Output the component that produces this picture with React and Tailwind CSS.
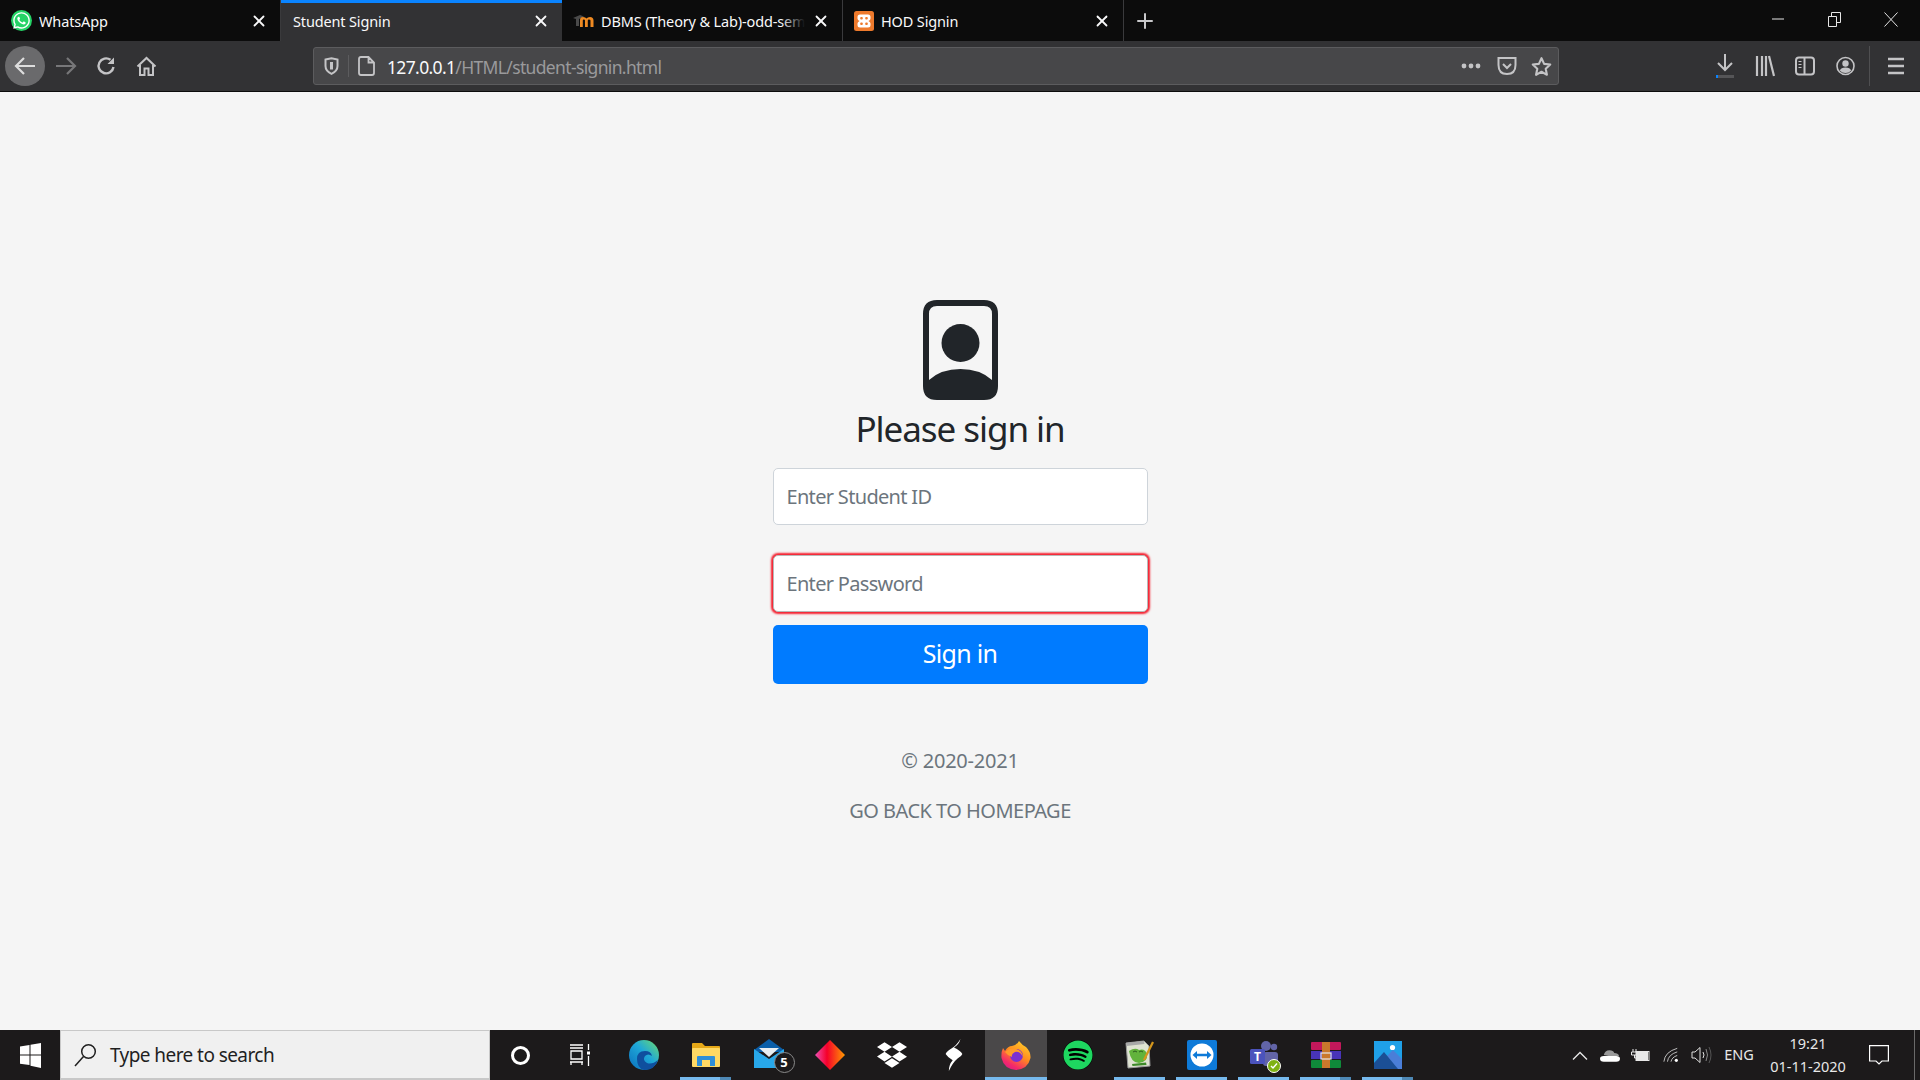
import { useState } from "react";
import { X, Plus } from "lucide-react";
import { FaWhatsapp, FaDropbox, FaSpotify } from "react-icons/fa";

const tabs = [
  { title: "WhatsApp", icon: "whatsapp" },
  { title: "Student Signin", active: true },
  { title: "DBMS (Theory & Lab)-odd-sem", icon: "moodle", fade: true },
  { title: "HOD Signin", icon: "xampp" },
];

const TabIcon = ({ name }) => {
  if (name === "whatsapp") {
    return (
      <span className="w-[21px] h-[21px] rounded-full bg-[#25d366] flex items-center justify-center shrink-0 text-white">
        <FaWhatsapp size={19} />
      </span>
    );
  }
  if (name === "moodle") {
    return (
      <svg width="21" height="20" viewBox="0 0 21 20" className="shrink-0">
        <path d="M0 7 L7 4 L11 5.5 L6 8 V15 H3 V8 Z" fill="#4a4a4a" />
        <path d="M7 16 V9 Q7 6 10 6 Q12.5 6 13.5 7.5 Q14.5 6 17 6 Q20.5 6 20.5 9.5 V16 H17.5 V9.5 Q17.5 8.5 15.8 8.5 Q14.8 8.5 14.8 9.5 V16 H12 V9.5 Q12 8.5 10.8 8.5 Q9.8 8.5 9.8 9.5 V16 Z" fill="#ef8a22" />
      </svg>
    );
  }
  if (name === "xampp") {
    return (
      <svg width="20" height="20" viewBox="0 0 20 20" className="shrink-0">
        <rect width="20" height="20" rx="2.5" fill="#ee7a2c" />
        <path d="M6 3.5 H14 Q16.5 3.5 16.5 6 V7.5 Q16.5 9 14.5 10 Q16.5 11 16.5 12.5 V14 Q16.5 16.5 14 16.5 H6 Q3.5 16.5 3.5 14 V12.5 Q3.5 11 5.5 10 Q3.5 9 3.5 7.5 V6 Q3.5 3.5 6 3.5 Z" fill="#fff" />
        <rect x="6.2" y="6" width="2.6" height="2.4" rx="1" fill="#ee7a2c" />
        <rect x="11.2" y="6" width="2.6" height="2.4" rx="1" fill="#ee7a2c" />
        <rect x="6.2" y="11.6" width="2.6" height="2.4" rx="1" fill="#ee7a2c" />
        <rect x="11.2" y="11.6" width="2.6" height="2.4" rx="1" fill="#ee7a2c" />
      </svg>
    );
  }
  return null;
};

const TabBar = () => (
  <div className="h-[41px] bg-[#0c0c0c] flex items-stretch shrink-0">
    {tabs.map((tab) => (
      <div
        key={tab.title}
        className={
          tab.active
            ? "w-[281px] bg-[#323234] border-t-[3px] border-[#0a84ff] flex items-center pl-3 pr-[12px] pb-[3px] gap-2 text-[#f9f9fa]"
            : "w-[281px] border-r border-[#3a3a3c] flex items-center pl-[11px] pr-[12px] gap-[7px] text-[#f9f9fa]"
        }
      >
        {tab.icon && <TabIcon name={tab.icon} />}
        <div className="relative flex-1 overflow-hidden whitespace-nowrap text-[14.5px] leading-5 tracking-[-0.01em]">
          {tab.title}
          {tab.fade && (
            <span className="absolute right-0 top-0 bottom-0 w-6 bg-gradient-to-r from-transparent to-[#0c0c0c]" />
          )}
        </div>
        <X size={18} strokeWidth={2.4} className="shrink-0 text-[#f9f9fa]" />
      </div>
    ))}
    <div className="w-[42px] flex items-center justify-center text-[#c8c8ca]">
      <Plus size={24} strokeWidth={2} />
    </div>
    <div className="flex-1" />
    <div className="w-[57px] flex items-center justify-center pb-[3px]">
      <svg width="12" height="2" viewBox="0 0 12 2"><path d="M0 1 H12" stroke="#e6e6e6" /></svg>
    </div>
    <div className="w-[56px] flex items-center justify-center pb-[3px]">
      <svg width="13" height="15" viewBox="0 0 13 15" fill="none" stroke="#e6e6e6">
        <path d="M.5 4.5 H8.5 V14.5 H.5 Z" />
        <path d="M3.5 4 V.5 H12.5 V10.5 H9" />
      </svg>
    </div>
    <div className="w-[58px] flex items-center justify-center pb-[3px]">
      <svg width="14" height="15" viewBox="0 0 14 15" stroke="#e6e6e6"><path d="M.5 .5 L13.5 14.5 M13.5 .5 L.5 14.5" /></svg>
    </div>
  </div>
);

const ToolIcon = ({ width = 40, children, className = "" }) => (
  <div className={"h-full flex items-center justify-center shrink-0 " + className} style={{ width }}>
    {children}
  </div>
);

const Toolbar = () => (
  <div className="h-[51px] bg-[#323234] border-b border-[#0c0c0c] flex items-center shrink-0 text-[#c4c4c6]">
    <div className="pl-[5px] flex items-center h-full">
      <div className="w-10 h-10 rounded-full bg-[#6a6a6c] flex items-center justify-center">
        <svg width="22" height="20" viewBox="0 0 22 20" fill="none" stroke="#ddd" strokeWidth="2.2"><path d="M21 10 H2 M10 2 L2 10 L10 18" /></svg>
      </div>
    </div>
    <ToolIcon width={41}>
      <svg width="22" height="20" viewBox="0 0 22 20" fill="none" stroke="#777779" strokeWidth="2.2"><path d="M1 10 H20 M12 2 L20 10 L12 18" /></svg>
    </ToolIcon>
    <ToolIcon width={40}>
      <svg width="20" height="20" viewBox="0 0 20 20" fill="none" stroke="currentColor" strokeWidth="2.4">
        <path d="M17.5 11 A7.5 7.5 0 1 1 14.5 3.8" />
        <path d="M18 1.5 V8 H11.5 Z" fill="currentColor" stroke="none" />
      </svg>
    </ToolIcon>
    <ToolIcon width={40}>
      <svg width="21" height="21" viewBox="0 0 21 21" fill="none" stroke="currentColor" strokeWidth="2">
        <path d="M1.5 10.5 L10.5 2 L19.5 10.5" />
        <path d="M4 9 V19 H8.5 V12.5 H12.5 V19 H17 V9" />
      </svg>
    </ToolIcon>
    <div className="w-[147px] shrink-0" />
    <div className="w-[1246px] h-[38px] bg-[#474749] border border-[#5c5c5e] rounded-[3px] flex items-center shrink-0">
      <ToolIcon width={34}>
        <svg width="15" height="18" viewBox="0 0 15 18" fill="none" stroke="currentColor" strokeWidth="2">
          <path d="M1.5 2.5 L7.5 1.2 L13.5 2.5 V9 Q13.5 14 7.5 16.8 Q1.5 14 1.5 9 Z" />
          <path d="M7.5 5 V12.5" strokeWidth="3" />
        </svg>
      </ToolIcon>
      <div className="w-px h-[22px] bg-[#5c5c5e] shrink-0" />
      <ToolIcon width={34}>
        <svg width="17" height="20" viewBox="0 0 17 20" fill="none" stroke="currentColor" strokeWidth="1.8">
          <path d="M3 1 H10.5 L16 6.5 V17 Q16 19 14 19 H3 Q1 19 1 17 V3 Q1 1 3 1 Z M10.5 1 V6.5 H16" />
        </svg>
      </ToolIcon>
      <div className="flex-1 text-[17.5px] leading-6 whitespace-nowrap pl-[4px] pt-[1px] tracking-[-0.037em]">
        <span className="text-[#f9f9fa]">127.0.0.1</span>
        <span className="text-[#9a9a9c]">/HTML/student-signin.html</span>
      </div>
      <ToolIcon width={36}>
        <svg width="20" height="6" viewBox="0 0 20 6" fill="currentColor">
          <circle cx="3" cy="3" r="2.4" /><circle cx="10" cy="3" r="2.4" /><circle cx="17" cy="3" r="2.4" />
        </svg>
      </ToolIcon>
      <ToolIcon width={35}>
        <svg width="20" height="20" viewBox="0 0 20 20" fill="none" stroke="currentColor" strokeWidth="2">
          <path d="M1.5 2 H18.5 V9 Q18.5 18 10 18 Q1.5 18 1.5 9 Z" />
          <path d="M6 8 L10 12 L14 8" />
        </svg>
      </ToolIcon>
      <ToolIcon width={34}>
        <svg width="21" height="21" viewBox="0 0 24 24" fill="none" stroke="currentColor" strokeWidth="2.4" strokeLinejoin="round">
          <path d="M12 2.5 L15 9 L22 9.8 L16.8 14.5 L18.2 21.5 L12 18 L5.8 21.5 L7.2 14.5 L2 9.8 L9 9 Z" />
        </svg>
      </ToolIcon>
    </div>
    <div className="w-[146px] shrink-0" />
    <ToolIcon width={40}>
      <div className="relative w-[18px] h-[24px]">
        <svg width="18" height="18" viewBox="0 0 18 18" fill="none" stroke="currentColor" strokeWidth="2"><path d="M9 0 V16 M2 9 L9 16 L16 9" /></svg>
        <div className="absolute left-0 right-0 bottom-0 h-[3px] bg-[#555557]">
          <div className="w-[2px] h-full bg-[#0a84ff]" />
        </div>
      </div>
    </ToolIcon>
    <ToolIcon width={40}>
      <svg width="20" height="22" viewBox="0 0 20 22" fill="none" stroke="currentColor" strokeWidth="2.2">
        <path d="M2 1 V21 M7 1 V21 M11 1 V21 M14 1 L19 21" />
      </svg>
    </ToolIcon>
    <ToolIcon width={40}>
      <svg width="20" height="20" viewBox="0 0 20 20" fill="none" stroke="currentColor" strokeWidth="2">
        <rect x="1" y="1.5" width="18" height="17" rx="3" />
        <path d="M9.5 1.5 V18.5" />
        <path d="M3.5 5.5 H6.5 M3.5 8.5 H6.5 M3.5 11.5 H6.5" strokeWidth="1.2" />
      </svg>
    </ToolIcon>
    <ToolIcon width={40}>
      <svg width="19" height="20" viewBox="0 0 19 20" fill="currentColor">
        <circle cx="9.5" cy="10" r="8.5" fill="none" stroke="currentColor" strokeWidth="1.6" />
        <circle cx="9.5" cy="7.5" r="3.2" />
        <path d="M3.8 14.5 Q5 11.5 9.5 11.5 Q14 11.5 15.2 14.5 Q13 17 9.5 17 Q6 17 3.8 14.5 Z" />
      </svg>
    </ToolIcon>
    <div className="w-px h-[40px] bg-[#4f4f51] shrink-0 ml-[4px]" />
    <ToolIcon width={52}>
      <svg width="16" height="18" viewBox="0 0 16 18" fill="none" stroke="currentColor" strokeWidth="2.4"><path d="M0 2 H16 M0 9 H16 M0 16 H16" /></svg>
    </ToolIcon>
  </div>
);

const SigninForm = () => {
  const [studentId, setStudentId] = useState("");
  const [password, setPassword] = useState("");

  return (
    <form className="w-[375px] flex flex-col items-center" onSubmit={(e) => e.preventDefault()}>
      <svg width="75" height="100" viewBox="0 0 75 100" className="mb-[8px]">
        <path
          fillRule="evenodd"
          d="M14 0 H61 Q75 0 75 14 V86 Q75 100 61 100 H14 Q0 100 0 86 V14 Q0 0 14 0 Z M14 6 Q6 6 6 14 V80 Q18 69 37.5 69 Q57 69 69 80 V14 Q69 6 61 6 Z"
          fill="#212529"
        />
        <circle cx="37.5" cy="43" r="19" fill="#212529" />
      </svg>
      <h1 className="text-[35px] leading-[42px] text-[#212529] mb-[18px] font-normal whitespace-nowrap tracking-[-0.03em]">Please sign in</h1>
      <input
        type="text"
        value={studentId}
        onChange={(e) => setStudentId(e.target.value)}
        placeholder="Enter Student ID"
        className="w-full h-[57px] bg-white border border-[#ced4da] rounded-[5px] px-[13px] text-[20px] tracking-[-0.034em] outline-none placeholder:text-[#6c757d] mb-[30px]"
      />
      <input
        type="password"
        value={password}
        onChange={(e) => setPassword(e.target.value)}
        placeholder="Enter Password"
        className="w-full h-[57px] bg-white border border-[#b8b8b8] rounded-[5px] px-[13px] text-[20px] tracking-[-0.034em] outline-none placeholder:text-[#6c757d] shadow-[0_0_2px_2px_#f5202f] mb-[13px]"
      />
      <button type="submit" className="w-full h-[59px] bg-[#007bff] rounded-[5px] text-white text-[25px] tracking-[-0.028em] mb-[62px]">
        Sign in
      </button>
      <p className="text-[20px] leading-[30px] text-[#6c757d] mb-[20px] tracking-[-0.011em]">© 2020-2021</p>
      <a className="text-[20px] leading-[30px] text-[#6c757d] tracking-[-0.026em]">GO BACK TO HOMEPAGE</a>
    </form>
  );
};

const EdgeIcon = () => (
  <svg width="32" height="32" viewBox="0 0 32 32">
    <defs>
      <linearGradient id="edge" x1="0" y1="1" x2="1" y2="0">
        <stop offset="0" stopColor="#0a6ebd" />
        <stop offset="0.55" stopColor="#1fa8d8" />
        <stop offset="1" stopColor="#6fdc6c" />
      </linearGradient>
    </defs>
    <circle cx="16" cy="16" r="15" fill="url(#edge)" />
    <path d="M9 20 Q9 12 17 12 Q23 12 24 17 Q20 14 17 17 Q14 21 19 24 Q24 26 30 21 Q27 31 16 31 Q9 29 9 20 Z" fill="#0f4f9e" />
  </svg>
);

const ExplorerIcon = () => (
  <svg width="30" height="26" viewBox="0 0 30 26">
    <path d="M1 2 Q1 1 2 1 H11 L14 4 H28 Q29 4 29 5 V8 H1 Z" fill="#e6a817" />
    <rect x="1" y="6" width="28" height="19" rx="1" fill="#ffd964" />
    <path d="M6 24 V15 Q6 14 7 14 H23 Q24 14 24 15 V24 H19 V18 H11 V24 Z" fill="#2f8fd8" />
  </svg>
);

const MailIcon = () => (
  <div className="relative w-[41px] h-[32px] ml-[12px]">
    <svg width="30" height="30" viewBox="0 0 30 30">
      <path d="M0 11 L15 0 L30 11 V13 H0 Z" fill="#0a5ea8" />
      <path d="M5 9 H25 L15 18 Z" fill="#e8eef2" />
      <path d="M0 10 L15 20 L30 10 V29 H0 Z" fill="#28a8ea" />
    </svg>
    <span className="absolute right-0 bottom-[-2px] w-[21px] h-[21px] rounded-full bg-[#1c1a1b] border border-[#8a8a8a] text-white text-[13px] font-bold flex items-center justify-center">
      5
    </span>
  </div>
);

const DiamondIcon = () => (
  <svg width="30" height="30" viewBox="0 0 30 30">
    <defs>
      <linearGradient id="diamond" x1="0" y1="0" x2="1" y2="0">
        <stop offset="0" stopColor="#ee4fb4" />
        <stop offset="0.4" stopColor="#f5002a" />
        <stop offset="1" stopColor="#ff9a00" />
      </linearGradient>
    </defs>
    <path d="M15 0 L30 15 L15 30 L0 15 Z" fill="url(#diamond)" />
  </svg>
);

const StreamIcon = () => (
  <svg width="18" height="32" viewBox="0 0 14 30" preserveAspectRatio="none" fill="#fff">
    <path d="M12 0 Q11 5 7 8 Q12 11 13.5 14 Q13 16 10 18 Q6 22 3 30 Q3 24 6 20 Q2 17 0.5 14 Q1 12 5 9 Q9 6 12 0 Z" />
  </svg>
);

const FirefoxIcon = () => (
  <svg width="30" height="30" viewBox="0 0 30 30">
    <defs>
      <linearGradient id="fox" x1="0.8" y1="0" x2="0.2" y2="1">
        <stop offset="0" stopColor="#ffd02a" />
        <stop offset="0.45" stopColor="#ff8a1f" />
        <stop offset="0.8" stopColor="#f4296a" />
        <stop offset="1" stopColor="#d81b8a" />
      </linearGradient>
    </defs>
    <path d="M18 1 Q21 5 25 7 Q30 12 29.5 18 Q27 29 15 30 Q3 29 0.5 18 Q0 12 2 8 L4 11 Q7 6 11 6 Q16 5 18 1 Z" fill="url(#fox)" />
    <circle cx="15.5" cy="15.5" r="6.5" fill="#7b2fd1" />
    <path d="M4 12 Q9 7 15 9 Q21 10 22 17 Q19 11 14 12 Q10 14 11 17 Q7 16 4 12 Z" fill="#ff9a2a" />
  </svg>
);

const NotepadIcon = () => (
  <svg width="30" height="30" viewBox="0 0 30 30">
    <path d="M1 3 L19 1 L24 6 L25 26 L3 28 Z" fill="#dfe3d2" stroke="#9a9a9a" />
    <path d="M1 3 L19 1 L19.5 4 L1.5 6 Z" fill="#a8a8a8" />
    <path d="M4 11 Q10 7 14 10 Q20 8 22 14 Q23 22 14 23 Q6 23 4 11 Z" fill="#62b33c" />
    <path d="M7 24 L21 22.5 L21.5 25 L7.5 26 Z" fill="#3e8a2a" />
    <path d="M8 12 Q10 10 12 12 M14 12 Q16 10 18 12" stroke="#2d5e1d" fill="none" />
    <path d="M19 20 L28 2" stroke="#d4961c" strokeWidth="2.2" />
  </svg>
);

const TeamViewerIcon = () => (
  <svg width="30" height="30" viewBox="0 0 30 30">
    <rect width="30" height="30" rx="2" fill="#0e7ad8" />
    <circle cx="15" cy="15" r="11.5" fill="#fff" />
    <path d="M5.5 15 L10 11 V13.7 H20 V11 L24.5 15 L20 19 V16.3 H10 V19 Z" fill="#0e7ad8" />
  </svg>
);

const TeamsIcon = () => (
  <div className="relative w-[31px] h-[31px]">
    <svg width="30" height="30" viewBox="0 0 30 30">
      <circle cx="17" cy="6" r="5" fill="#6264a7" />
      <circle cx="25" cy="7" r="3.2" fill="#6264a7" />
      <rect x="14" y="12" width="15" height="14" rx="3" fill="#6264a7" />
      <rect x="1" y="9" width="15" height="15" rx="1.5" fill="#4b53bc" />
    </svg>
    <span className="absolute left-[3px] top-[9px] text-white text-[12px] font-bold leading-[15px] w-[12px] text-center">T</span>
    <span className="absolute right-[-1px] bottom-[-2px] w-[14px] h-[14px] rounded-full bg-[#7fb213] border border-white flex items-center justify-center">
      <svg width="8" height="8" viewBox="0 0 8 8" fill="none" stroke="#fff" strokeWidth="1.4"><path d="M1 4 L3 6 L7 1.5" /></svg>
    </span>
  </div>
);

const WinrarIcon = () => (
  <svg width="30" height="26" viewBox="0 0 30 26">
    <rect width="30" height="8" rx="1" fill="#c2185b" />
    <rect y="9" width="30" height="8" fill="#4834b8" />
    <rect y="18" width="30" height="8" rx="1" fill="#0f8a3a" />
    <rect x="11" width="8" height="26" fill="#c9782c" />
    <rect x="10" y="11" width="10" height="6" fill="none" stroke="#e8e8e8" strokeWidth="1.2" />
  </svg>
);

const PhotosIcon = () => (
  <svg width="28" height="28" viewBox="0 0 28 28">
    <rect width="28" height="28" fill="#1fa0e8" />
    <circle cx="18.5" cy="6.5" r="2.6" fill="#fff" />
    <path d="M13 15 L19 9 L28 18 V28 H10 Z" fill="#4a7ed8" />
    <path d="M0 22 L10 11 L24 28 H0 Z" fill="#1b4f96" />
  </svg>
);

const taskbarApps = [
  { key: "edge", icon: <EdgeIcon /> },
  { key: "explorer", icon: <ExplorerIcon />, open: true, split: true },
  { key: "mail", icon: <MailIcon /> },
  { key: "diamond", icon: <DiamondIcon /> },
  { key: "dropbox", icon: <FaDropbox size={30} color="#fff" /> },
  { key: "stream", icon: <StreamIcon /> },
  { key: "firefox", icon: <FirefoxIcon />, focused: true },
  { key: "spotify", icon: <span className="w-[30px] h-[30px] rounded-full bg-black flex items-center justify-center"><FaSpotify size={30} color="#1ed760" /></span> },
  { key: "notepad", icon: <NotepadIcon />, open: true },
  { key: "teamviewer", icon: <TeamViewerIcon />, open: true },
  { key: "teams", icon: <TeamsIcon />, open: true },
  { key: "winrar", icon: <WinrarIcon />, open: true, split: true },
  { key: "photos", icon: <PhotosIcon />, open: true, split: true },
];

const TaskSlot = ({ app }) => (
  <div className={app.focused ? "relative w-[62px] h-full bg-[#4a4849] flex items-center justify-center" : "relative w-[62px] h-full flex items-center justify-center"}>
    {app.icon}
    {app.focused && <div className="absolute left-0 right-0 bottom-0 h-[3px] bg-[#76b9ed]" />}
    {app.open && !app.focused && <div className="absolute left-[5px] right-[6px] bottom-0 h-[3px] bg-[#76b9ed]" />}
    {app.split && <div className="absolute left-[45px] right-[6px] bottom-0 h-[3px] bg-[#4e88b5]" />}
  </div>
);

const Taskbar = () => (
  <div className="h-[50px] bg-[#1c1a1b] flex items-center shrink-0 text-white">
    <div className="w-[60px] h-full flex items-center justify-center">
      <svg width="21" height="25" viewBox="0 0 21 25" fill="#fff">
        <path d="M0 3.5 L9.5 2 V11.5 H0 Z M10.5 1.8 L21 0 V11.5 H10.5 Z M0 12.5 H9.5 V22 L0 20.8 Z M10.5 12.5 H21 V25 L10.5 22.8 Z" />
      </svg>
    </div>
    <div className="w-[430px] h-full bg-[#f0f0f0] border border-[#c8c8c8] border-b-2 flex items-center pl-[13px] gap-[13px] text-[#1f1f1f]">
      <svg width="23" height="24" viewBox="0 0 23 24" fill="none" stroke="#1f1f1f" strokeWidth="1.5">
        <circle cx="14.5" cy="8.5" r="6.8" />
        <path d="M9.5 13.5 L1 23" />
      </svg>
      <span className="text-[19px] tracking-[-0.03em] pt-[1px]">Type here to search</span>
    </div>
    <div className="w-[60px] h-full flex items-center justify-center">
      <span className="w-[19px] h-[19px] rounded-full border-[3px] border-white" />
    </div>
    <div className="w-[60px] h-full flex items-center justify-center">
      <svg width="20" height="22" viewBox="0 0 20 22" fill="none" stroke="#fff" strokeWidth="1.3">
        <path d="M0 1 H13 M0 4 H13 M1 7 H12 V15 H1 Z M0 18 H13 M1 18 V21 M12 18 V21" />
        <path d="M18.5 0 V6 M18.5 12 V22" />
        <rect x="17" y="7.5" width="3" height="3" fill="#fff" stroke="none" />
      </svg>
    </div>
    <div className="w-[3px] shrink-0" />
    {taskbarApps.map((app) => (
      <TaskSlot key={app.key} app={app} />
    ))}
    <div className="flex-1" />
    <div className="flex items-center h-full text-[#e8e8e8]">
      <svg width="16" height="9" viewBox="0 0 16 9" fill="none" stroke="currentColor" strokeWidth="1.3" className="mr-[12px]"><path d="M1 8.5 L8 1.5 L15 8.5" /></svg>
      <svg width="20" height="13" viewBox="0 0 21 13" className="mr-[10px]">
        <path d="M4 6 Q5 1 10 1 Q14 1 15 4 Q19 4 20 7 L9 7 Z" fill="#9a9a9a" />
        <path d="M0 10 Q0 7 4 7 H17 Q21 7 21 10 Q21 13 17 13 H4 Q0 13 0 10 Z" fill="#fff" />
      </svg>
      <svg width="20" height="13" viewBox="0 0 20 13" fill="none" stroke="#e8e8e8" className="mr-[13px]">
        <path d="M3 0 V3 M6 0 V3 M1.5 3 H7.5 V6 H1.5 Z M4.5 6 V9 H6" />
        <rect x="6" y="2.5" width="13" height="9" />
        <rect x="6" y="3" width="12" height="8" fill="#e8e8e8" stroke="none" />
      </svg>
      <svg width="16" height="16" viewBox="0 0 18 17" fill="none" stroke="#d0d0d0" strokeWidth="1" className="mr-[12px]">
        <path d="M1 16 Q2 5 16 1 M5 16 Q6 8 16 5 M9 16 Q10 11 16 9" />
        <circle cx="15" cy="14.5" r="1.8" fill="#fff" stroke="none" />
      </svg>
      <svg width="21" height="20" viewBox="0 0 21 20" fill="none" stroke="#e0e0e0" className="mr-[12px]">
        <path d="M1 7 H4 L9 2.5 V17.5 L4 13 H1 Z" />
        <path d="M12 7 Q14 10 12 13" />
        <path d="M15 4 Q18 10 15 16" stroke="#888" />
        <path d="M18 2 Q22 10 18 18" stroke="#555" />
      </svg>
      <span className="text-[14.5px] w-[30px] text-center mr-[14px]">ENG</span>
      <div className="w-[80px] text-center text-[14.5px] leading-[23px] whitespace-nowrap">
        <div>19:21</div>
        <div>01-11-2020</div>
      </div>
      <div className="w-[62px] flex justify-center">
        <svg width="20" height="20" viewBox="0 0 20 20" fill="none" stroke="#fff" strokeWidth="1.2">
          <path d="M.6 .6 H19.4 V16 H13 L10 19 L7 16 H.6 Z" />
        </svg>
      </div>
      <div className="w-[6px] h-full border-l border-[#6a6a6a] ml-[4px]" />
    </div>
  </div>
);

export default function App() {
  return (
    <div className="h-screen w-full flex flex-col overflow-hidden bg-[#f5f5f5] font-['Noto_Sans',sans-serif]">
      <TabBar />
      <Toolbar />
      <main className="flex-1 flex items-center justify-center pt-[3px]">
        <SigninForm />
      </main>
      <Taskbar />
    </div>
  );
}
